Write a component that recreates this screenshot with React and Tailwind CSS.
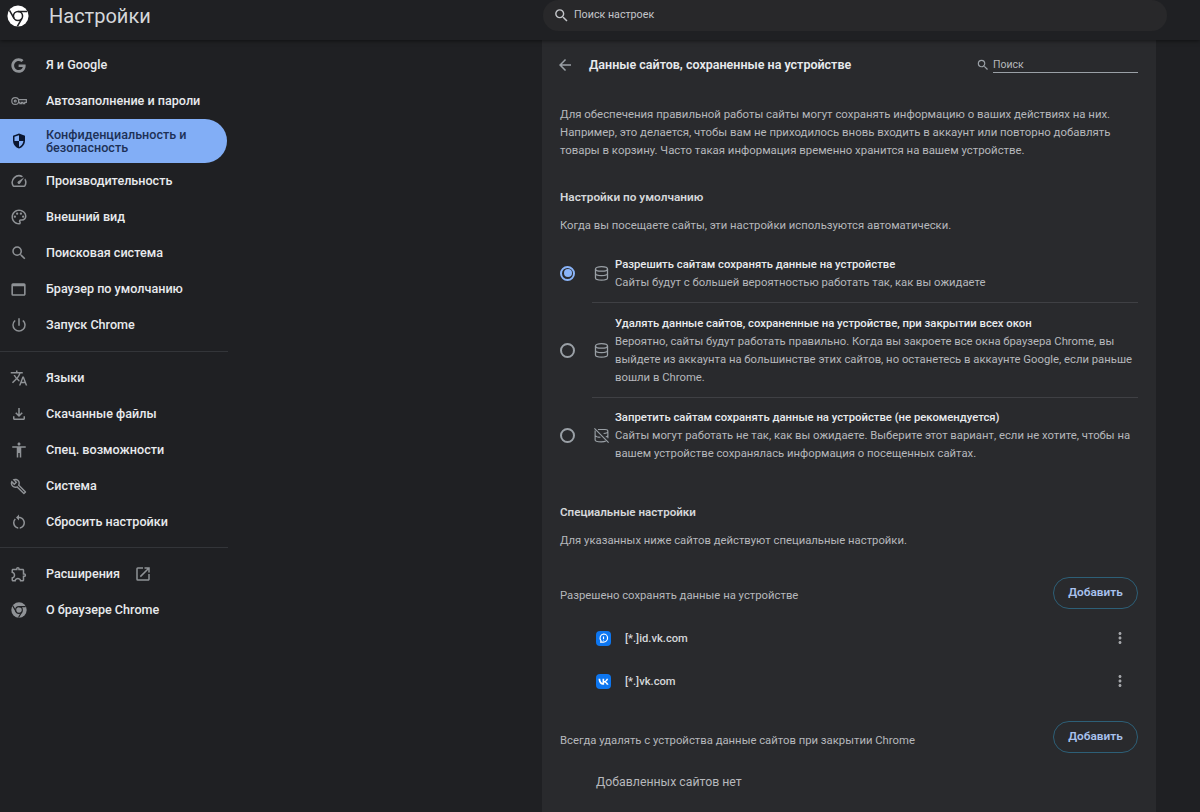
import {
  MdOutlineSpeed,
  MdOutlinePalette,
  MdSearch,
  MdOutlineWebAsset,
  MdOutlinePowerSettingsNew,
  MdTranslate,
  MdOutlineFileDownload,
  MdAccessibility,
  MdOutlineBuild,
  MdRestartAlt,
  MdOutlineExtension,
  MdOpenInNew,
  MdArrowBack,
  MdMoreVert,
} from "react-icons/md";
import { FaGoogle } from "react-icons/fa";

function ChromeIcon({ className, cut }) {
  return (
    <svg viewBox="0 0 24 24" className={className}>
      <circle cx="12" cy="12" r="11.500" fill="currentColor" />
      <g fill="none" stroke={cut} strokeWidth="1.700">
        <circle cx="12" cy="12" r="5" />
        <path d="M12 7h10M7.700 14.500 2.700 5.800M16.300 14.500 11.300 23.200" />
      </g>
    </svg>
  );
}

function KeyIcon({ className }) {
  return (
    <svg viewBox="0 0 24 24" className={className} fill="none" stroke="currentColor" strokeWidth="1.600">
      <circle cx="7" cy="12" r="4.600" />
      <circle cx="7" cy="12" r="1.300" />
      <path d="M11.600 10.200h10.200v3.600h-2.200v1.800h-2.200v-1.800h-2v1.800h-2.200v-1.800h-1.600" />
    </svg>
  );
}

function ShieldIcon({ className }) {
  return (
    <svg viewBox="0 0 24 24" className={className}>
      <path d="M12 2 4 5v6.200c0 5 3.400 9.400 8 10.800 4.600-1.400 8-5.800 8-10.800V5l-8-3Z" fill="#0b1730" />
      <path d="M12 4.200v7.800h5.900c-.5 3.700-2.900 6.800-5.900 7.900V12H6V6.400l6-2.200Z" fill="#82aef6" />
    </svg>
  );
}

function DbIcon({ className }) {
  return (
    <svg viewBox="0 0 24 24" className={className} fill="none" stroke="currentColor" strokeWidth="1.800">
      <ellipse cx="12" cy="5.500" rx="8.500" ry="3.200" />
      <path d="M3.500 5.500v13c0 1.700 3.800 3 8.500 3s8.500-1.300 8.500-3v-13" />
      <path d="M3.500 12c0 1.700 3.800 3 8.500 3s8.500-1.300 8.500-3" />
    </svg>
  );
}

function DbOffIcon({ className }) {
  return (
    <svg viewBox="0 0 24 24" className={className} fill="none" stroke="currentColor" strokeWidth="1.600">
      <path d="M7 3.500h10c2.500 0 4 1 4 2.500s-2 3-6 3.200M3 5v13.500c0 1.500 3.500 2.500 8.500 2.500 2.800 0 5.200-.4 6.600-1.200M21 6v10M3 12c1 1.500 4 2.500 7.500 2.500M21 12c-.6.900-1.800 1.600-3 2" />
      <path d="m2 2 20 20" />
    </svg>
  );
}

function ChatFavicon() {
  return (
    <div className="flex h-[15px] w-[15px] items-center justify-center rounded-[4px] bg-[#0d76f0]">
      <svg viewBox="0 0 16 16" className="h-[13px] w-[13px]" fill="none" stroke="#fff" strokeWidth="1.400">
        <path d="M8 2.500a5 5 0 0 1 0 10H4.500l.5-1.700A5 5 0 0 1 8 2.500Z" />
        <path d="M8 5.500v3M8 9.600v.8" />
      </svg>
    </div>
  );
}

function VkFavicon() {
  return (
    <div className="flex h-[15px] w-[15px] items-center justify-center rounded-[4px] bg-[#0d76f0]">
      <svg viewBox="0 0 16 16" className="h-[13px] w-[13px]" fill="#fff">
        <path d="M8.500 12C4.400 12 2 9.200 1.900 4.500h2.100c.1 3.400 1.600 4.900 2.800 5.200V4.500h2v3c1.200-.1 2.500-1.500 2.900-3h2c-.3 1.800-1.700 3.200-2.700 3.800 1 .5 2.600 1.700 3.200 3.700h-2.200c-.5-1.400-1.600-2.500-3.200-2.700V12h-.3Z" />
      </svg>
    </div>
  );
}

const topItems = [
  { label: "Я и Google", icon: <FaGoogle className="h-[15px] w-[15px]" /> },
  { label: "Автозаполнение и пароли", icon: <KeyIcon className="h-[18px] w-[18px]" /> },
  { label: "Конфиденциальность и безопасность", icon: <ShieldIcon className="h-[18px] w-[18px]" />, active: true },
  { label: "Производительность", icon: <MdOutlineSpeed className="h-[18px] w-[18px]" /> },
  { label: "Внешний вид", icon: <MdOutlinePalette className="h-[18px] w-[18px]" /> },
  { label: "Поисковая система", icon: <MdSearch className="h-[18px] w-[18px]" /> },
  { label: "Браузер по умолчанию", icon: <MdOutlineWebAsset className="h-[19px] w-[19px]" /> },
  { label: "Запуск Chrome", icon: <MdOutlinePowerSettingsNew className="h-[18px] w-[18px]" /> },
];

const midItems = [
  { label: "Языки", icon: <MdTranslate className="h-[18px] w-[18px]" /> },
  { label: "Скачанные файлы", icon: <MdOutlineFileDownload className="h-[18px] w-[18px]" /> },
  { label: "Спец. возможности", icon: <MdAccessibility className="h-[18px] w-[18px]" /> },
  { label: "Система", icon: <MdOutlineBuild className="h-[17px] w-[17px]" /> },
  { label: "Сбросить настройки", icon: <MdRestartAlt className="h-[18px] w-[18px]" /> },
];

function NavItem({ item, children }) {
  if (item.active) {
    return (
      <div className="mr-px flex h-[44px] items-center rounded-r-full bg-[#82aef6] text-[#1d3157]">
        <span className="flex w-[46px] shrink-0 justify-center pr-[9px]">{item.icon}</span>
        <span className="w-[160px] text-[12.6px] leading-[13px] font-medium">{item.label}</span>
      </div>
    );
  }
  return (
    <div className="flex h-[36px] items-center">
      <span className="flex w-[46px] shrink-0 justify-center pr-[9px] text-[#8f9296]">{item.icon}</span>
      <span className="pt-px text-[12.6px] font-medium text-[#e8eaed]">{item.label}</span>
      {children}
    </div>
  );
}

function Sidebar() {
  return (
    <nav className="w-[228px] shrink-0 pt-[7px]">
      {topItems.map((item) => (
        <NavItem key={item.label} item={item} />
      ))}
      <div className="my-[8px] h-px bg-[#333539]" />
      {midItems.map((item) => (
        <NavItem key={item.label} item={item} />
      ))}
      <div className="mt-[7px] mb-[8px] h-px bg-[#333539]" />
      <NavItem item={{ label: "Расширения", icon: <MdOutlineExtension className="h-[18px] w-[18px]" /> }}>
        <MdOpenInNew className="ml-[14px] h-[18px] w-[18px] text-[#8f9296]" />
      </NavItem>
      <NavItem item={{ label: "О браузере Chrome", icon: <ChromeIcon cut="#1f2023" className="h-[16px] w-[16px]" /> }} />
    </nav>
  );
}

function Radio({ checked, className }) {
  if (checked) {
    return (
      <div className={"flex h-[15px] w-[15px] shrink-0 items-center justify-center rounded-full border-2 border-[#8ab4f8] " + className}>
        <div className="h-[8px] w-[8px] rounded-full bg-[#8ab4f8]" />
      </div>
    );
  }
  return <div className={"h-[15px] w-[15px] shrink-0 rounded-full border-2 border-[#9aa0a6] " + className} />;
}

function Option({ checked, icon, title, children, border, className, radioClass }) {
  return (
    <div className="flex items-center">
      <Radio checked={checked} className={radioClass} />
      <div className={"ml-[17px] flex flex-1 items-center " + className + (border ? " border-b border-[#3f4044]" : "")}>
        <div className="flex w-[18px] shrink-0 justify-center text-[#9aa0a6]">{icon}</div>
        <div className="ml-[5px] pt-px text-[11.3px] leading-[18px] whitespace-nowrap">
          <div className="font-medium text-[#e8eaed]">{title}</div>
          <div className="text-[#b6b8bc]">{children}</div>
        </div>
      </div>
    </div>
  );
}

function AddRow({ label, labelClass }) {
  return (
    <div className="flex items-center justify-between">
      <span className={"text-[11.3px] text-[#b6b8bc] " + labelClass}>{label}</span>
      <button className="h-[32px] w-[85px] rounded-full border border-[#2d5f77] text-[11.8px] font-semibold text-[#a8c1ee]">
        Добавить
      </button>
    </div>
  );
}

function SiteRow({ icon, host }) {
  return (
    <div className="flex h-[43px] items-center pl-[36px]">
      {icon}
      <span className="ml-[14px] flex-1 pt-px text-[11.2px] font-medium text-[#d5d7da]">{host}</span>
      <MdMoreVert className="mr-[9px] mb-[2px] h-[18px] w-[18px] text-[#a4a6aa]" />
    </div>
  );
}

function Card() {
  return (
    <section className="ml-[314px] h-[772px] w-[614px] shrink-0 overflow-hidden bg-[#292a2d] px-[18px]">
      <div className="flex h-[50px] items-center">
        <MdArrowBack className="ml-[-4px] h-[18px] w-[18px] text-[#9aa0a6]" />
        <h2 className="ml-[15px] flex-1 pt-px text-[12.5px] font-semibold text-[#e8eaed]">Данные сайтов, сохраненные на устройстве</h2>
        <MdSearch className="mr-[3px] h-[14px] w-[14px] text-[#9aa0a6]" />
        <div className="h-[17px] w-[145px] translate-y-[-1px] border-b border-[#9aa0a6] pt-[2px] text-[10.5px] leading-[14px] text-[#b6b8bc]">Поиск</div>
      </div>

      <p className="mt-[15px] text-[11.4px] leading-[18px] whitespace-nowrap text-[#b6b8bc]">
        Для обеспечения правильной работы сайты могут сохранять информацию о ваших действиях на них.
        <br />
        Например, это делается, чтобы вам не приходилось вновь входить в аккаунт или повторно добавлять
        <br />
        товары в корзину. Часто такая информация временно хранится на вашем устройстве.
      </p>

      <h3 className="mt-[29px] text-[11.8px] leading-[18px] font-semibold text-[#d5d7da]">Настройки по умолчанию</h3>
      <p className="mt-[11px] text-[11.3px] leading-[18px] text-[#b6b8bc]">Когда вы посещаете сайты, эти настройки используются автоматически.</p>

      <div className="mt-[20px]">
        <Option checked border className="pb-[10px]" radioClass="mb-[12px]" icon={<DbIcon className="h-[17px] w-[17px]" />} title="Разрешить сайтам сохранять данные на устройстве">
          Сайты будут с большей вероятностью работать так, как вы ожидаете
        </Option>
        <Option border className="pt-[11px] pb-[10px]" radioClass="" icon={<DbIcon className="h-[17px] w-[17px]" />} title="Удалять данные сайтов, сохраненные на устройстве, при закрытии всех окон">
          Вероятно, сайты будут работать правильно. Когда вы закроете все окна браузера Chrome, вы
          <br />
          выйдете из аккаунта на большинстве этих сайтов, но останетесь в аккаунте Google, если раньше
          <br />
          вошли в Chrome.
        </Option>
        <Option className="pt-[10px]" radioClass="mt-[10px]" icon={<DbOffIcon className="h-[17px] w-[17px]" />} title="Запретить сайтам сохранять данные на устройстве (не рекомендуется)">
          Сайты могут работать не так, как вы ожидаете. Выберите этот вариант, если не хотите, чтобы на
          <br />
          вашем устройстве сохранялась информация о посещенных сайтах.
        </Option>
      </div>

      <h3 className="mt-[40px] text-[11.6px] leading-[18px] font-semibold text-[#d5d7da]">Специальные настройки</h3>
      <p className="mt-[11px] text-[11.3px] leading-[18px] text-[#b6b8bc]">Для указанных ниже сайтов действуют специальные настройки.</p>

      <div className="mt-[27px]">
        <AddRow label="Разрешено сохранять данные на устройстве" labelClass="pt-[7px]" />
      </div>
      <div className="mt-[8px]">
        <SiteRow icon={<ChatFavicon />} host="[*.]id.vk.com" />
        <SiteRow icon={<VkFavicon />} host="[*.]vk.com" />
      </div>
      <div className="mt-[18px]">
        <AddRow label="Всегда удалять с устройства данные сайтов при закрытии Chrome" labelClass="pt-[8px]" />
      </div>
      <p className="mt-[20px] pl-[36px] text-[12.300px] leading-[18px] text-[#b6b8bc]">Добавленных сайтов нет</p>
    </section>
  );
}

export default function App() {
  return (
    <div className="h-[812px] overflow-hidden bg-[#1f2023] font-['Roboto',sans-serif]">
      <header className="relative z-10 flex h-[40px] items-start bg-[#1f2023] shadow-[0_1px_4px_rgba(0,0,0,0.5)]">
        <div className="flex h-[31px] w-[543px] shrink-0 items-center pl-[7px]">
          <ChromeIcon cut="#1f2023" className="h-[22px] w-[22px] text-white" />
          <h1 className="ml-[20px] text-[20px] text-[#d5d7da]">Настройки</h1>
        </div>
        <div className="flex h-[31px] w-[624px] items-center rounded-full bg-[#28282a] pl-[10px]">
          <MdSearch className="h-[17px] w-[17px] text-[#c4c6ca]" />
          <span className="ml-[4px] text-[10.7px] text-[#c4c6ca]">Поиск настроек</span>
        </div>
      </header>
      <div className="flex">
        <Sidebar />
        <Card />
      </div>
    </div>
  );
}
